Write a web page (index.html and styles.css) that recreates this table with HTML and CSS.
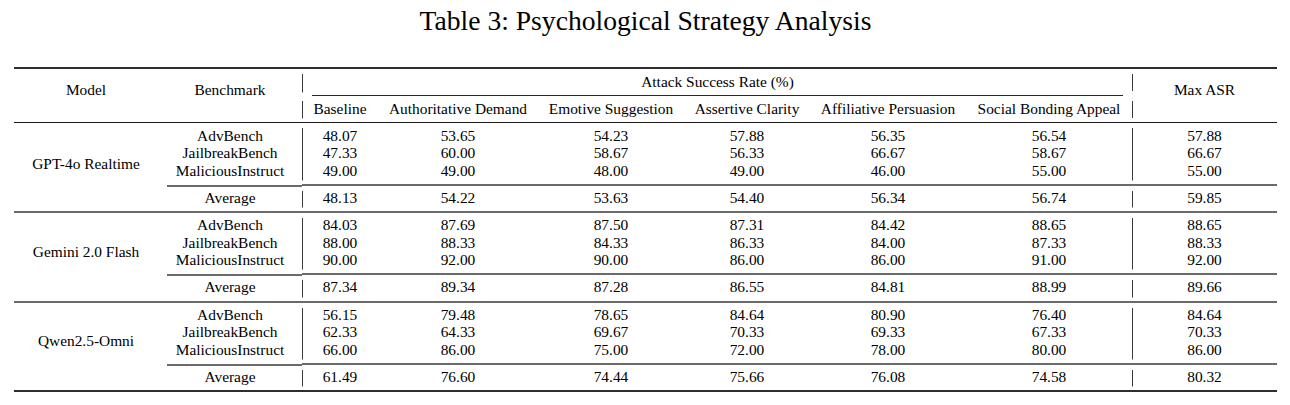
FILE: index.html
```html
<!DOCTYPE html>
<html lang="en">
<head>
<meta charset="utf-8">
<title>Table 3: Psychological Strategy Analysis</title>
<link rel="stylesheet" href="styles.css">
</head>
<body>
<table class="results">
  <caption class="caption">Table 3: Psychological Strategy Analysis</caption>
  <colgroup>
    <col class="c-model">
    <col class="c-bench">
    <col class="c-base">
    <col class="c-auth">
    <col class="c-emo">
    <col class="c-assert">
    <col class="c-affil">
    <col class="c-social">
    <col class="c-max">
  </colgroup>
  <thead>
    <tr class="head-top">
      <th rowspan="2" class="head-span">Model</th>
      <th rowspan="2" class="head-span">Benchmark</th>
      <th colspan="6" class="group-head bar bar-head"><div class="group-title">Attack Success Rate (%)</div></th>
      <th rowspan="2" class="head-span bar-double">Max ASR</th>
    </tr>
    <tr class="head-sub">
      <th class="bar bar-head">Baseline</th>
      <th>Authoritative Demand</th>
      <th>Emotive Suggestion</th>
      <th>Assertive Clarity</th>
      <th>Affiliative Persuasion</th>
      <th>Social Bonding Appeal</th>
    </tr>
  </thead>
  <tbody class="group first-group">
    <tr class="row-first">
      <td rowspan="4" class="model">GPT-4o Realtime</td>
      <td>AdvBench</td>
      <td class="bar bar-top">48.07</td><td>53.65</td><td>54.23</td><td>57.88</td><td>56.35</td><td>56.54</td>
      <td class="bar bar-top">57.88</td>
    </tr>
    <tr>
      <td>JailbreakBench</td>
      <td class="bar">47.33</td><td>60.00</td><td>58.67</td><td>56.33</td><td>66.67</td><td>58.67</td>
      <td class="bar">66.67</td>
    </tr>
    <tr class="row-last">
      <td>MaliciousInstruct</td>
      <td class="bar bar-bottom">49.00</td><td>49.00</td><td>48.00</td><td>49.00</td><td>46.00</td><td>55.00</td>
      <td class="bar bar-bottom">55.00</td>
    </tr>
    <tr class="avg">
      <td class="avg-label">Average</td>
      <td class="bar bar-head">48.13</td><td>54.22</td><td>53.63</td><td>54.40</td><td>56.34</td><td>56.74</td>
      <td class="bar bar-head">59.85</td>
    </tr>
  </tbody>
  <tbody class="group">
    <tr class="row-first">
      <td rowspan="4" class="model">Gemini 2.0 Flash</td>
      <td>AdvBench</td>
      <td class="bar bar-top">84.03</td><td>87.69</td><td>87.50</td><td>87.31</td><td>84.42</td><td>88.65</td>
      <td class="bar bar-top">88.65</td>
    </tr>
    <tr>
      <td>JailbreakBench</td>
      <td class="bar">88.00</td><td>88.33</td><td>84.33</td><td>86.33</td><td>84.00</td><td>87.33</td>
      <td class="bar">88.33</td>
    </tr>
    <tr class="row-last">
      <td>MaliciousInstruct</td>
      <td class="bar bar-bottom">90.00</td><td>92.00</td><td>90.00</td><td>86.00</td><td>86.00</td><td>91.00</td>
      <td class="bar bar-bottom">92.00</td>
    </tr>
    <tr class="avg">
      <td class="avg-label">Average</td>
      <td class="bar bar-head">87.34</td><td>89.34</td><td>87.28</td><td>86.55</td><td>84.81</td><td>88.99</td>
      <td class="bar bar-head">89.66</td>
    </tr>
  </tbody>
  <tbody class="group">
    <tr class="row-first">
      <td rowspan="4" class="model">Qwen2.5-Omni</td>
      <td>AdvBench</td>
      <td class="bar bar-top">56.15</td><td>79.48</td><td>78.65</td><td>84.64</td><td>80.90</td><td>76.40</td>
      <td class="bar bar-top">84.64</td>
    </tr>
    <tr>
      <td>JailbreakBench</td>
      <td class="bar">62.33</td><td>64.33</td><td>69.67</td><td>70.33</td><td>69.33</td><td>67.33</td>
      <td class="bar">70.33</td>
    </tr>
    <tr class="row-last">
      <td>MaliciousInstruct</td>
      <td class="bar bar-bottom">66.00</td><td>86.00</td><td>75.00</td><td>72.00</td><td>78.00</td><td>80.00</td>
      <td class="bar bar-bottom">86.00</td>
    </tr>
    <tr class="avg">
      <td class="avg-label">Average</td>
      <td class="bar bar-head">61.49</td><td>76.60</td><td>74.44</td><td>75.66</td><td>76.08</td><td>74.58</td>
      <td class="bar bar-head">80.32</td>
    </tr>
  </tbody>
</table>
</body>
</html>
```

FILE: styles.css
```css
html, body {
  margin: 0;
  padding: 0;
  background: #ffffff;
}

body {
  font-family: "Liberation Serif", "Times New Roman", serif;
  color: #000000;
}

.results {
  margin-left: 14px;
  width: 1263px;
  table-layout: fixed;
  border-collapse: collapse;
  border-top: 2px solid #2e2e2e;
  border-bottom: 2px solid #2e2e2e;
  font-size: 15.4px;
  line-height: 17.5px;
}

.caption {
  caption-side: top;
  font-size: 27.6px;
  line-height: 32px;
  padding: 5px 0 30px;
  text-align: center;
  font-weight: normal;
}

.c-model { width: 144px; }
.c-bench { width: 144px; }
.c-base { width: 76px; }
.c-auth { width: 160px; }
.c-emo { width: 146px; }
.c-assert { width: 126px; }
.c-affil { width: 156px; }
.c-social { width: 166px; }
.c-max { width: 145px; }

th, td {
  padding: 0;
  text-align: center;
  white-space: nowrap;
  font-weight: normal;
  background-repeat: no-repeat;
}

/* header */
thead {
  border-bottom: 1px solid #1a1a1a;
}

.head-top th {
  padding-top: 3.5px;
  padding-bottom: 4.5px;
}

.head-top .head-span {
  vertical-align: top;
  padding-top: 12px;
}

.head-top .group-head {
  padding: 3.5px 9px 0 10px;
}

.group-title {
  padding-bottom: 4.5px;
  border-bottom: 1px solid #2a2a2a;
}

.head-sub th {
  padding-top: 4px;
  padding-bottom: 4.5px;
}

/* vertical separators drawn as thin backgrounds so they stop short of rules */
.bar {
  background-image: linear-gradient(#3a3a3a, #3a3a3a);
  background-size: 1px 100%;
  background-position: left top;
}

.bar-head {
  background-size: 1px calc(100% - 8.5px);
  background-position: left 0 top 5px;
}

.bar-top {
  background-size: 1px calc(100% - 5px);
  background-position: left bottom;
}

.bar-bottom {
  background-size: 1px calc(100% - 3.5px);
  background-position: left top;
}

.bar-double {
  background-image: linear-gradient(#3a3a3a, #3a3a3a), linear-gradient(#3a3a3a, #3a3a3a);
  background-size: 1px 17px, 1px 17px;
  background-position: left 0 top 5px, left 0 top 32px;
}

/* body groups */
.group + .group {
  border-top: 2px solid #6a6a6a;
}

.row-first td {
  padding-top: 3px;
}

.first-group .row-first td {
  padding-top: 4px;
}

.row-first .model {
  padding-top: 0;
}

.row-last td {
  padding-bottom: 4.5px;
}

.model {
  vertical-align: middle;
  padding-bottom: 11px;
}

.avg td {
  padding-top: 3px;
  padding-bottom: 5px;
  border-top: 2px solid #6a6a6a;
}

.avg .avg-label {
  border-top: 2px solid transparent;
  background-image: linear-gradient(#6a6a6a, #6a6a6a);
  background-size: calc(100% - 9px) 2px;
  background-position: right 0 top 0;
  background-origin: border-box;
}
```
